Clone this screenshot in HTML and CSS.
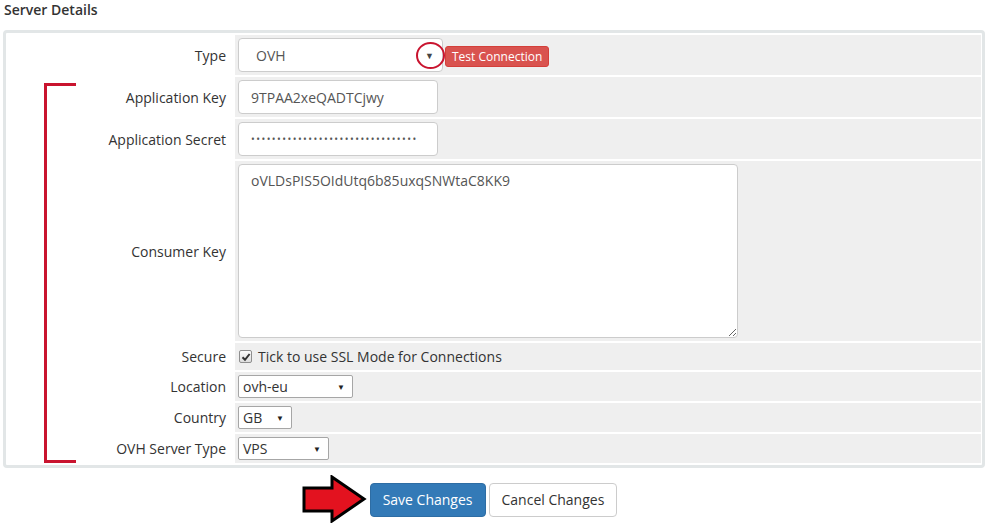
FILE: index.html
```html
<!DOCTYPE html>
<html>
<head>
<meta charset="utf-8">
<link rel="stylesheet" href="styles.css">
</head>
<body>
<h3 class="title">Server Details</h3>
<div class="box">
  <div class="row r-big">
    <div class="label">Type</div>
    <div class="field center">
      <div class="select-lg"><span>OVH</span><span class="caret">&#9660;</span></div>
      <button class="btn-test">Test Connection</button>
    </div>
  </div>
  <div class="row r-big">
    <div class="label">Application Key</div>
    <div class="field"><input class="input" type="text" value="9TPAA2xeQADTCjwy"></div>
  </div>
  <div class="row r-big">
    <div class="label">Application Secret</div>
    <div class="field"><div class="input pwd">&#8226;&#8226;&#8226;&#8226;&#8226;&#8226;&#8226;&#8226;&#8226;&#8226;&#8226;&#8226;&#8226;&#8226;&#8226;&#8226;&#8226;&#8226;&#8226;&#8226;&#8226;&#8226;&#8226;&#8226;&#8226;&#8226;&#8226;&#8226;&#8226;&#8226;&#8226;&#8226;</div></div>
  </div>
  <div class="row">
    <div class="label">Consumer Key</div>
    <div class="field"><textarea class="textarea">oVLDsPIS5OIdUtq6b85uxqSNWtaC8KK9</textarea></div>
  </div>
  <div class="row r-check">
    <div class="label">Secure</div>
    <div class="field center">
      <span class="check"><svg width="10" height="10" viewBox="0 0 10 10"><path d="M1.5 5.2 L4 7.8 L8.6 2" fill="none" stroke="#333" stroke-width="2"/></svg></span>
      <span class="check-text">Tick to use SSL Mode for Connections</span>
    </div>
  </div>
  <div class="row r-sm">
    <div class="label">Location</div>
    <div class="field"><div class="select-sm w-loc"><span>ovh-eu</span><span class="caret-sm">&#9660;</span></div></div>
  </div>
  <div class="row r-sm">
    <div class="label">Country</div>
    <div class="field"><div class="select-sm w-cty"><span>GB</span><span class="caret-sm">&#9660;</span></div></div>
  </div>
  <div class="row r-sm">
    <div class="label">OVH Server Type</div>
    <div class="field"><div class="select-sm w-vps"><span>VPS</span><span class="caret-sm">&#9660;</span></div></div>
  </div>
</div>
<div class="actions">
  <button class="btn btn-primary">Save Changes</button>
  <button class="btn btn-default">Cancel Changes</button>
</div>

<div class="bracket"></div>
<div class="ring"></div>
<svg class="arrow" width="66" height="48" viewBox="0 0 66 48">
  <polygon points="2,13 30,13 30,2 62,24 30,46 30,36 2,36" fill="#e3121f" stroke="#000" stroke-width="3" stroke-linejoin="miter"/>
</svg>
</body>
</html>
```
FILE: styles.css
```css
* { box-sizing: border-box; }
html, body { margin: 0; padding: 0; background: #fff; }
body {
  font-family: "Open Sans", "Liberation Sans", sans-serif;
  font-size: 14px;
  color: #333;
  width: 987px;
  height: 527px;
  position: relative;
  overflow: hidden;
}
.title {
  margin: 0 0 10px 4px;
  font-size: 14px;
  font-weight: 600;
  line-height: 20px;
  color: #333;
}
.box {
  margin: 0 2px 0 3px;
  border: 3px solid #e2e6e7;
  border-radius: 4px;
  padding: 2px 1px;
  display: flex;
  flex-direction: column;
  gap: 2px;
  background: #fff;
}
.row { display: flex; gap: 2px; }
.label {
  width: 226px;
  flex: none;
  display: flex;
  align-items: center;
  justify-content: flex-end;
  padding-right: 7px;
  background: #fff;
  white-space: nowrap;
}
.field {
  flex: 1;
  background: #efefef;
  padding: 3px;
  display: flex;
  align-items: flex-start;
}
.field.center { align-items: center; }
.r-check { height: 27px; }
.r-check .field { padding: 0 3px 0 4px; }
.r-sm { height: 29px; }

.select-lg {
  width: 205px;
  height: 34px;
  border: 1px solid #ccc;
  border-radius: 4px;
  background: #fff;
  display: flex;
  align-items: center;
  justify-content: space-between;
  padding: 0 8px 0 17px;
  color: #555;
}
.caret { font-size: 9px; color: #444; }
.btn-test {
  margin-left: 2px;
  margin-top: 3px;
  height: 21px;
  padding: 0 6px;
  border: 1px solid #d43f3a;
  border-radius: 3px;
  background: #d9534f;
  color: #fff;
  font-family: "Open Sans", "Liberation Sans", sans-serif;
  font-size: 12px;
  line-height: 19px;
}
.input {
  width: 200px;
  height: 34px;
  border: 1px solid #ccc;
  border-radius: 4px;
  background: #fff;
  padding: 6px 12px;
  font-family: "Open Sans", "Liberation Sans", sans-serif;
  font-size: 14px;
  color: #555;
  outline: none;
}
.pwd {
  display: flex;
  align-items: center;
  font-size: 10px;
  letter-spacing: 1.45px;
  color: #555;
  overflow: hidden;
  white-space: nowrap;
}
.textarea {
  width: 500px;
  height: 174px;
  border: 1px solid #ccc;
  border-radius: 4px;
  background: #fff;
  padding: 6px 12px;
  font-family: "Open Sans", "Liberation Sans", sans-serif;
  font-size: 14px;
  line-height: 20px;
  color: #555;
  resize: both;
  outline: none;
  display: block;
  margin: 0;
}
.check {
  width: 13px;
  height: 13px;
  border: 1px solid #8e8e8e;
  border-radius: 2px;
  background: linear-gradient(#fbfbfb, #dedede);
  display: flex;
  align-items: center;
  justify-content: center;
  flex: none;
}
.check-text { margin-left: 6px; color: #333; }

.select-sm {
  height: 23px;
  border: 1px solid #a6a6a6;
  border-radius: 2px;
  background: #fff;
  display: flex;
  align-items: center;
  justify-content: space-between;
  padding: 0 7px 0 4px;
  color: #333;
}
.caret-sm { font-size: 8px; color: #222; }
.w-loc { width: 115px; }
.w-cty { width: 54px; }
.w-vps { width: 91px; }

.actions {
  margin-top: 15px;
  display: flex;
  justify-content: center;
  gap: 3px;
}
.btn {
  height: 34px;
  padding: 6px 12px;
  border-radius: 4px;
  font-family: "Open Sans", "Liberation Sans", sans-serif;
  font-size: 14px;
  line-height: 20px;
}
.btn-primary { background: #337ab7; border: 1px solid #2e6da4; color: #fff; }
.btn-default { background: #fff; border: 1px solid #ccc; color: #333; }

.bracket {
  position: absolute;
  left: 44px;
  top: 83px;
  width: 32px;
  height: 380px;
  border: 3px solid #c9142f;
  border-right: none;
}
.ring {
  position: absolute;
  left: 416px;
  top: 42px;
  width: 29px;
  height: 27px;
  border: 2.5px solid #c9142f;
  border-radius: 50%;
}
.arrow {
  position: absolute;
  left: 302px;
  top: 475px;
}
```
